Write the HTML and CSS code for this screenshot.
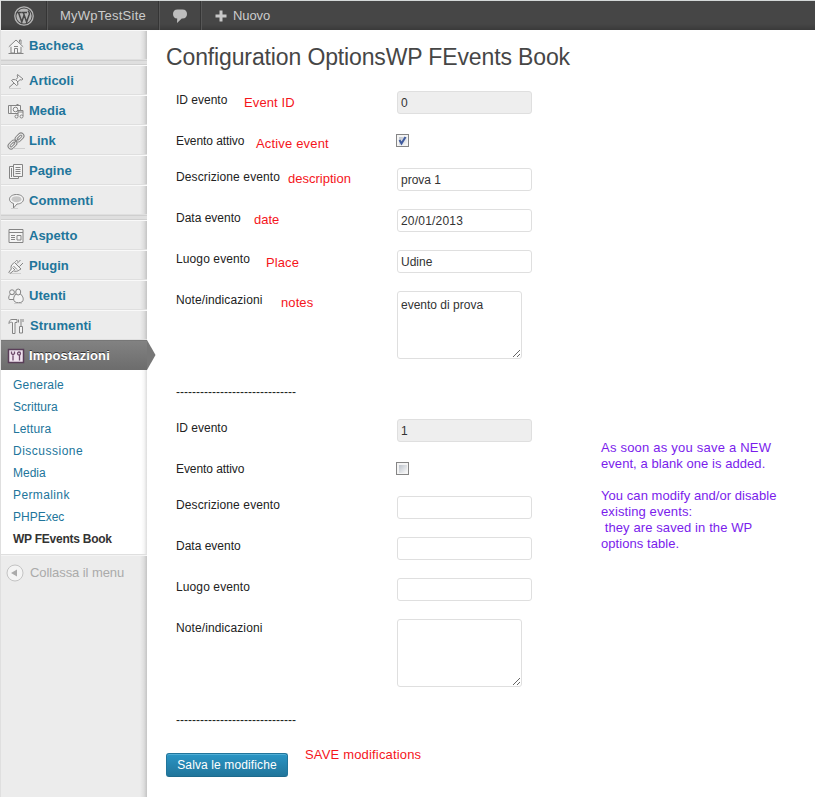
FILE: index.html
```html
<!DOCTYPE html>
<html lang="it">
<head>
<meta charset="utf-8">
<title>WP FEvents Book</title>
<link rel="stylesheet" href="styles.css">
</head>
<body>
<header class="bar">
  <a class="cell logo"><svg width="20" height="20" viewBox="0 0 20 20"><circle cx="10" cy="10" r="9.2" fill="none" stroke="#b5b5b5" stroke-width="1.3"/><circle cx="10" cy="10" r="7.6" fill="#b5b5b5"/><path d="M2.8 6.4h5M8 6.4h5M4.500 6.500l3.300 9.400 2.300-6.800M9.300 6.500l3.300 9.400 2.700-7.700c.5-1.600-.6-2.600-1.200-3.600" fill="none" stroke="#464646" stroke-width="1.5"/></svg></a>
  <a class="cell site">MyWpTestSite</a>
  <a class="cell comments"><svg width="16" height="16" viewBox="0 0 16 16"><path d="M5.500 1.500h5C13.500 1.500 15 3.500 15 6s-1.500 4.600-4.500 4.600H9.800L5 15l.2-4.400C2.500 10.400 1 8.500 1 6s1.500-4.500 4.500-4.500z" fill="#bdbdbd"/></svg></a>
  <a class="cell new"><svg width="12" height="12" viewBox="0 0 12 12"><path d="M6 .5v11M.5 6h11" stroke="#c8c8c8" stroke-width="3"/></svg><span>Nuovo</span></a>
</header>
<div class="shell">
  <nav class="side">
    <a class="item"><svg viewBox="0 0 16 16"><path d="M3 8v7h10V8L8 3.500z"/><path d="M.8 8.800 8 2l7.200 6.800M11.500 4.500V2H13v4M.5 15.500h15M6.500 15v-4.500h3V15M6 8.500h4"/></svg><span class="t1">Bacheca</span></a>
    <div class="sep"></div>
    <a class="item"><svg viewBox="0 0 16 16"><path d="M9.500 1.500 15 6l-1.500 1-1.500-.3L9.500 9l.5 2.500-1.500 1-5-5L5 6.500l2.500.3L10 4.500l-.8-1.500zM6 10l-5 4.500M8 7l2 2"/><path class="sh" d="M1 15.500h12"/></svg><span class="t2">Articoli</span></a>
    <a class="item"><svg viewBox="0 0 16 16"><path d="M.5 2.500h12v8H.500zM3 2.500v8M8.500 1.500h2"/><circle cx="7.500" cy="6.500" r="2.300"/><path d="M10 13V7.500h5V13M10 9h5"/><circle cx="8.500" cy="13.500" r="1.500"/><circle cx="13.500" cy="13.500" r="1.500"/></svg><span class="t3">Media</span></a>
    <a class="item"><svg viewBox="0 0 16 16"><g transform="rotate(-45 8 8)"><rect x="-2" y="5" width="10" height="6" rx="3"/><rect x="8" y="5" width="10" height="6" rx="3"/><rect x="0" y="7" width="6" height="2" rx="1"/><rect x="10" y="7" width="6" height="2" rx="1"/><path d="M4.500 8h7"/></g><path class="sh" d="M5 15.500h12"/></svg><span class="t4">Link</span></a>
    <a class="item"><svg viewBox="0 0 16 16"><path d="M5 3.500H1.500v12h9v-2M5.500 1.500h9v12h-9zM7.500 4.500h5M7.500 6.500h5M7.500 8.500h5M7.500 10.500h5M3.500 5v9"/></svg><span class="t5">Pagine</span></a>
    <a class="item"><svg viewBox="0 0 16 16"><path d="M8.500 1.500c4 0 7 2 7 4.700 0 2.600-2.700 4.800-6.500 4.800L5.500 15v-4.500C3 9.700 1.500 8.200 1.500 6.200c0-2.700 3-4.700 7-4.700z"/><ellipse class="fillg" cx="8.500" cy="6.200" rx="5" ry="3"/><path class="sh" d="M3 15.500h7"/></svg><span class="t6">Commenti</span></a>
    <div class="sep"></div>
    <a class="item"><svg viewBox="0 0 16 16"><path d="M1 1.500h14v13H1zM1 4.500h14M3 7.500h4M3 9.500h4M3 11.500h4M9 7.500h4v4.500H9z"/></svg><span class="t7">Aspetto</span></a>
    <a class="item"><svg viewBox="0 0 16 16"><path d="M9 5.500 12.500 2M11.500 8.500 15 5M6.500 4.500l6.500 6.500-1.500.8c-1.500 1.600-4.200 1.900-6 1L2 15.500.8 14.300 3.300 11c-.8-2 0-4.300 1.900-5.500zM5.500 8l3.500 3.500M4.500 9.500l2.500 2.500M8 4l-.5-.5 1-1 1.500.8"/><path class="sh" d="M3 15.500h10"/></svg><span class="t8">Plugin</span></a>
    <a class="item"><svg viewBox="0 0 16 16"><path d="M2.500 6C.6 7.800.3 10 1.200 11.500H6M2.500 6h4"/><circle cx="4" cy="4.200" r="2.400"/><path d="M8 6C5.500 8.500 5 11.500 6.500 13.500c2 1.700 6 1.700 8 0 1.500-2.500.5-5-2-7.500z"/><ellipse cx="10.200" cy="4" rx="2.500" ry="3"/><path class="sh" d="M6 15.500h8"/></svg><span class="t9">Utenti</span></a>
    <a class="item"><svg viewBox="0 0 16 16"><path d="M1 5.500C1 3 2 1.500 4 1.500h5v3H7v11H4.500V4.500C3 4 2 4 1 5.500zM13 1v7M11.500 8.500h3v6.500h-3zM10.500 1.500v3M15 1v3"/></svg><span class="t10">Strumenti</span></a>
    <a class="item current"><svg viewBox="0 0 16 16"><rect class="panel" x=".5" y="1.500" width="15" height="13"/><path class="pins" d="M5 8v4.500M11.500 7v5.500M3.500 3.500v2L5 7l1.500-1.500v-2"/><circle class="pins" cx="11" cy="5.500" r="1.500"/></svg><span class="t11">Impostazioni</span><svg class="arrow" viewBox="0 0 9 30"><path d="M0 0 8.500 15 0 30z"/></svg></a>
    <ul class="sub">
      <li><span class="s1">Generale</span></li><li><span class="s2">Scrittura</span></li><li><span class="s3">Lettura</span></li><li><span class="s4">Discussione</span></li><li><span class="s5">Media</span></li><li><span class="s6">Permalink</span></li><li><span class="s7">PHPExec</span></li><li class="here"><span class="s8">WP FEvents Book</span></li>
    </ul>
    <a class="collapse"><svg viewBox="0 0 18 18"><circle cx="9" cy="9" r="8" fill="#f4f4f4" stroke="#c4c4c4"/><path d="M5 9l6-3.500v7z" fill="#aaa"/></svg><span>Collassa il menu</span></a>
  </nav>
  <main class="main">
    <h1><span>Configuration OptionsWP FEvents Book</span></h1>
    <form>
      <div class="row"><label>ID evento</label><div class="field off">0</div></div>
      <div class="row short"><label class="l2">Evento attivo</label><div class="check"><svg viewBox="0 0 13 13"><path d="M3.500 6l2 3.500L9.500 3" fill="none" stroke="#3f5a9e" stroke-width="2"/></svg></div></div>
      <div class="row"><label class="l3">Descrizione evento</label><div class="field">prova 1</div></div>
      <div class="row"><label>Data evento</label><div class="field date">20/01/2013</div></div>
      <div class="row"><label class="l3">Luogo evento</label><div class="field">Udine</div></div>
      <div class="row tall"><label class="l3">Note/indicazioni</label><div class="area">evento di prova<svg class="grip" viewBox="0 0 9 9"><path d="M1 8 8 1M5 8l3-3"/></svg></div></div>
      <div class="row short"><label class="dash">------------------------------</label></div>
      <div class="row"><label>ID evento</label><div class="field off">1</div></div>
      <div class="row short"><label class="l2">Evento attivo</label><div class="check"></div></div>
      <div class="row"><label class="l3">Descrizione evento</label><div class="field"></div></div>
      <div class="row"><label>Data evento</label><div class="field"></div></div>
      <div class="row"><label class="l3">Luogo evento</label><div class="field"></div></div>
      <div class="row tall"><label class="l3">Note/indicazioni</label><div class="area"><svg class="grip" viewBox="0 0 9 9"><path d="M1 8 8 1M5 8l3-3"/></svg></div></div>
      <div class="row short"><label class="dash">------------------------------</label></div>
      <button type="button" class="save"><span>Salva le modifiche</span></button>
    </form>
  </main>
</div>
<span class="note n1">Event ID</span>
<span class="note n2">Active event</span>
<span class="note n3">description</span>
<span class="note n4">date</span>
<span class="note n5">Place</span>
<span class="note n6">notes</span>
<span class="note n7">SAVE modifications</span>
<p class="note info"><span class="i1">As soon as you save a NEW</span><br><span class="i2">event, a blank one is added.</span><br><br><span class="i3">You can modify and/or disable</span><br><span class="i4">existing events:</span><br><span class="i5">&nbsp;they are saved in the WP</span><br><span class="i6">options table.</span></p>
</body>
</html>
```
FILE: styles.css
```css
* { box-sizing: border-box; }
body { margin: 0; width: 815px; height: 797px; overflow: hidden; position: relative; display: flex; flex-direction: column; background: #fff; border-left: 1px solid #dfdfdf; font: 12px/14px "Liberation Sans", Arial, sans-serif; color: #333; }
.bar { flex: none; height: 30px; border-top: 1px solid #d4d8d8; background: linear-gradient(#464646 0 23px, #3a3a3a); display: flex; color: #ccc; font-size: 13px; line-height: 28px; }
.cell { display: flex; align-items: center; border-right: 1px solid #353535; box-shadow: 1px 0 #575757; height: 29px; padding-top: 1px; }
.logo { width: 46px; padding-left: 13px; }
.site { width: 112px; padding-left: 13px; letter-spacing: .24px; }
.comments { width: 42px; padding-left: 13px; }
.new { padding-left: 14px; gap: 6px; border: 0; box-shadow: none; letter-spacing: -.1px; }
.new svg { margin-top: -1px; }
.shell { flex: 1; display: flex; min-height: 0; }
.side { width: 146px; flex: none; background: linear-gradient(90deg, transparent 139px, #00000010 143px, #0000002c), #ececec; }
.item { position: relative; display: flex; align-items: center; height: 30px; padding: 1px 0 0 7px; gap: 5px; border-top: 1px solid #f9f9f9; border-bottom: 1px solid #dfdfdf; font-size: 13px; font-weight: bold; color: #21759b; line-height: 18px; }
.item > svg:first-child { width: 16px; height: 16px; flex: none; fill: #f4f4f4; stroke: #848484; stroke-width: 1; overflow: visible; }
.item .sh { stroke: #cfcfcf; }
.item .fillg { fill: #c8c8c8; stroke: none; }
.t1, .t6 { letter-spacing: .12px; }
.t10 { letter-spacing: .1px; padding-left: 1px; }
.t11 { letter-spacing: .12px; }
.sep { height: 5px; background: #dfdfdf; border-top: 1px solid #cfcfcf; border-bottom: 1px solid #cfcfcf; }
.current { background: linear-gradient(#828282, #6d6d6d); color: #fff; border-color: #777 #777 #6d6d6d; text-shadow: 0 -1px #333; }
.item .panel { fill: #f1e4f0; stroke: #593e58; stroke-width: 1.500; }
.item .pins { stroke: #6f4b6c; stroke-width: 1.300; fill: none; }
.arrow { position: absolute; left: 146px; top: -1px; width: 9px; height: 30px; fill: #777; }
.sub { list-style: none; margin: 0; padding: 4px 0 4px 12px; height: 185px; background: linear-gradient(90deg, transparent 140px, #00000008 143px, #0002), #fff; border-bottom: 1px solid #dfdfdf; color: #21759b; line-height: 22px; }
.sub li { height: 22px; }
.s1 { letter-spacing: .2px; }
.s3 { letter-spacing: .12px; }
.s4 { letter-spacing: .5px; }
.s6 { letter-spacing: .38px; }
.s8 { letter-spacing: -.25px; }
.here { color: #333; font-weight: bold; }
.collapse { display: flex; align-items: center; height: 35px; padding-left: 5px; gap: 6px; color: #aaa; font-size: 13px; letter-spacing: -.08px; border-top: 1px solid #f4f4f4; }
.collapse svg { width: 18px; height: 18px; }
.main { flex: 1; padding-left: 19px; }
h1 { margin: 0; height: 51px; padding-top: 12px; font-size: 23px; line-height: 30px; font-weight: normal; color: #464646; white-space: nowrap; letter-spacing: -.13px; }
.row { display: grid; grid-template-columns: 221px 135px; height: 41px; padding: 10px 0 0 10px; align-items: start; }
.short { height: 36px; }
.tall { height: 92px; }
label { padding-top: 2px; color: #222; white-space: nowrap; justify-self: start; }
.l2 { letter-spacing: -.08px; }
.l3 { letter-spacing: .11px; }
.field { width: 135px; height: 23px; border: 1px solid #dfdfdf; border-radius: 3px; padding: 4px 3px; }
.date { letter-spacing: .2px; }
.off { background: #eee; }
.area { position: relative; width: 125px; height: 68px; border: 1px solid #dfdfdf; border-radius: 3px; padding: 6px 3px; }
.grip { position: absolute; right: 0; bottom: 0; width: 9px; height: 9px; stroke: #555; fill: none; stroke-width: .9; }
.check { width: 13px; height: 13px; margin: 2px 0 0 -1px; border: 1px solid #858585; background: linear-gradient(135deg, #bdc3cc, #fafafa) center / 8px 8px no-repeat #f4f4f4; }
.check svg { display: block; width: 13px; height: 13px; margin: -1px; }
.save { display: block; width: 122px; height: 24px; margin: 16px 0 0; padding: 0; border: 1px solid #21759b; border-bottom-color: #1e6a8d; border-radius: 3px; background: linear-gradient(#2a95c5, #21759b); box-shadow: inset 0 1px #78c8e680; color: #fff; font: 12px/22px "Liberation Sans", Arial, sans-serif; letter-spacing: .12px; white-space: nowrap; }
.note { position: absolute; color: #f5151b; font-size: 13px; line-height: 16px; white-space: nowrap; }
.n1 { left: 243px; top: 95px; letter-spacing: .12px; }
.n2 { left: 255px; top: 136px; letter-spacing: .17px; }
.n3 { left: 287px; top: 171px; }
.n4 { left: 253px; top: 212px; }
.n5 { left: 265px; top: 255px; letter-spacing: .1px; }
.n6 { left: 280px; top: 295px; letter-spacing: .1px; }
.n7 { left: 304px; top: 747px; letter-spacing: .17px; }
.info { left: 600px; top: 440px; margin: 0; color: #7a1cec; }
.i1 { letter-spacing: .22px; }
.i2, .i3, .i6 { letter-spacing: .06px; }
.i4, .i5 { letter-spacing: .1px; }
```
